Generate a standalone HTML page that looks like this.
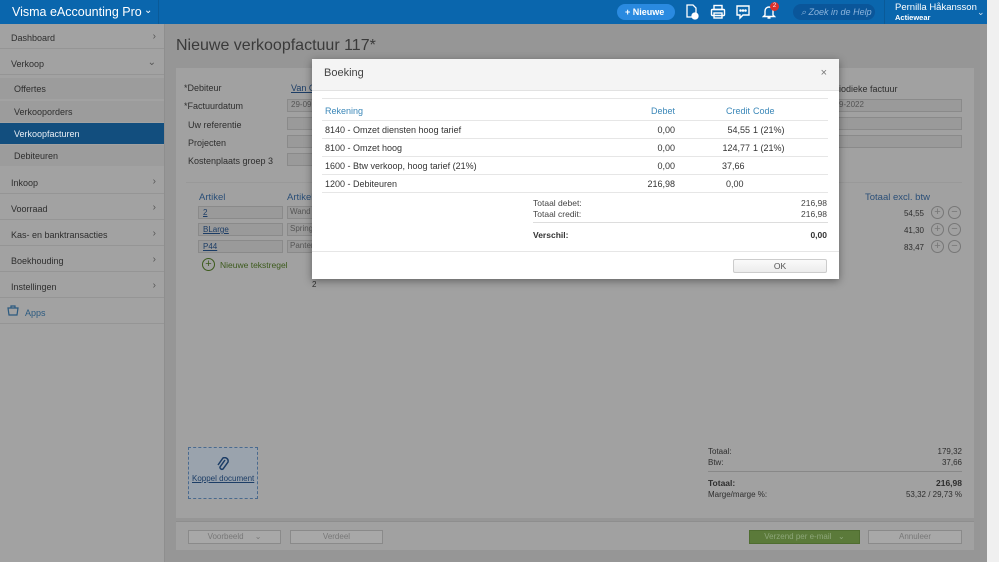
<!DOCTYPE html>
<html><head><meta charset="utf-8"><style>
*{box-sizing:border-box;margin:0;padding:0}
body{width:999px;height:562px;overflow:hidden;font-family:"Liberation Sans",sans-serif;font-size:9px;color:#333;background:#969696;position:relative}
.a{position:absolute}
.top{left:0;top:0;width:987px;height:24px;background:#0a66ad}
.side{left:0;top:24px;width:165px;height:538px;background:#a2a2a2;border-right:1px solid #8e8e8e}
.si{position:absolute;left:0;width:164px;height:25px;border-bottom:1px solid #959595;padding:9px 0 0 11px;font-size:9px;color:#2e2e2e}
.sub{position:absolute;left:0;width:164px;height:21px;padding:6px 0 0 14px;color:#2e2e2e;background:#9c9c9c}
.chev{position:absolute;right:8px;top:7px;color:#555;font-size:10px}
.card{left:176px;top:68px;width:798px;height:450px;background:#a1a1a1}
.inp{position:absolute;height:13px;background:#9a9a9a;border:1px solid #8a8a8a}
.lbl{position:absolute;color:#2e2e2e;font-size:9px}
.lnk{color:#1c3d66;text-decoration:underline}
.modal{left:312px;top:59px;width:527px;height:220px;background:#fff;box-shadow:0 2px 8px rgba(0,0,0,.4)}
.mh{height:32px;background:#f4f4f4;border-bottom:1px solid #e2e2e2;padding:8px 0 0 12px;font-size:11px;color:#444}
.row{position:absolute;left:10px;width:506px;height:18px;border-bottom:1px solid #e6e6e6;font-size:9px;color:#333}
.row span{position:absolute;top:4px}
.r{text-align:right}
.circ{position:absolute;width:13px;height:13px;border:1px solid #777;border-radius:50%;color:#777;font-size:11px;line-height:10px;text-align:center}
.btn{position:absolute;height:14px;border:1px solid #8a8a8a;background:#a8a8a8;color:#777;font-size:8px;text-align:center;line-height:12px}
</style></head><body>
<div class="a top">
 <div class="a" style="left:12px;top:5px;color:#fff;font-size:12.5px">Visma eAccounting Pro</div>
 <div class="a" style="left:144px;top:5px;color:#fff;font-size:10px">⌄</div>
 <div class="a" style="left:158px;top:0;width:1px;height:24px;background:#0a5a98"></div>
 <div class="a" style="left:617px;top:4px;width:58px;height:16px;background:#2a8ae0;border-radius:8px;color:#fff;font-size:9px;font-weight:bold;line-height:16px;padding-left:8px">+ Nieuwe</div>
 <svg class="a" style="left:684px;top:4px" width="16" height="16" viewBox="0 0 16 16" fill="none" stroke="#fff" stroke-width="1.3"><path d="M3 1h6l3 3v9H3z"/><circle cx="11" cy="12" r="3" fill="#fff"/></svg>
 <svg class="a" style="left:710px;top:4px" width="16" height="16" viewBox="0 0 16 16" fill="none" stroke="#fff" stroke-width="1.4"><rect x="4" y="1.5" width="8" height="4"/><rect x="1.5" y="5.5" width="13" height="6" rx="1"/><rect x="4" y="9" width="8" height="5"/></svg>
 <svg class="a" style="left:735px;top:4px" width="16" height="16" viewBox="0 0 16 16" fill="none" stroke="#fff" stroke-width="1.4"><path d="M2 2h12v9H8l-3 3v-3H2z"/><circle cx="5.5" cy="6.5" r=".6" fill="#fff"/><circle cx="8" cy="6.5" r=".6" fill="#fff"/><circle cx="10.5" cy="6.5" r=".6" fill="#fff"/></svg>
 <svg class="a" style="left:761px;top:4px" width="16" height="16" viewBox="0 0 16 16" fill="none" stroke="#fff" stroke-width="1.4"><path d="M4 11V7a4 4 0 0 1 8 0v4l1.5 1.5h-11z M6.5 14h3"/></svg>
 <div class="a" style="left:770px;top:2px;width:9px;height:9px;border-radius:50%;background:#d9302c;color:#fff;font-size:6px;text-align:center;line-height:9px">2</div>
 <div class="a" style="left:793px;top:4px;width:82px;height:16px;background:#0a569a;border-radius:8px;color:#8db5dd;font-size:9px;font-style:italic;line-height:16px;padding-left:8px">⌕ Zoek in de Help</div>
 <div class="a" style="left:884px;top:0;width:1px;height:24px;background:#0a5a98"></div>
 <div class="a" style="left:895px;top:2px;color:#fff;font-size:9.5px">Pernilla Håkansson</div>
 <div class="a" style="left:895px;top:13px;color:#fff;font-size:7.5px;font-weight:bold">Actiewear</div>
 <div class="a" style="left:977px;top:7px;color:#cfe0f0;font-size:9px">⌄</div>
</div>
<div class="a" style="left:987px;top:0;width:12px;height:562px;background:#f0f0f0"></div>
<div class="a side">
 <div class="si" style="top:0">Dashboard<span class="chev">›</span></div>
 <div class="si" style="top:26px">Verkoop<span class="chev">⌄</span></div>
 <div class="sub" style="top:54px">Offertes</div>
 <div class="sub" style="top:77px">Verkooporders</div>
 <div class="sub" style="top:99px;background:#124e7e;color:#e8eef5">Verkoopfacturen</div>
 <div class="sub" style="top:121px">Debiteuren</div>
 <div class="si" style="top:145px">Inkoop<span class="chev">›</span></div>
 <div class="si" style="top:171px">Voorraad<span class="chev">›</span></div>
 <div class="si" style="top:197px">Kas- en banktransacties<span class="chev">›</span></div>
 <div class="si" style="top:223px">Boekhouding<span class="chev">›</span></div>
 <div class="si" style="top:249px">Instellingen<span class="chev">›</span></div>
 <div class="si" style="top:275px;color:#2b5a80;padding-left:25px">Apps</div>
 <svg class="a" style="left:7px;top:280px" width="12" height="12" viewBox="0 0 12 12" fill="none" stroke="#2b5a80" stroke-width="1.2"><path d="M1 4h10l-1 7H2z M4 4V2h4v2"/></svg>
</div>
<div class="a" style="left:176px;top:37px;font-size:16px;color:#3a3a3a">Nieuwe verkoopfactuur 117*</div>
<div class="a card">
 <div class="lbl" style="left:8px;top:15px">*Debiteur</div>
 <div class="lbl" style="left:8px;top:33px">*Factuurdatum</div>
 <div class="lbl" style="left:12px;top:52px">Uw referentie</div>
 <div class="lbl" style="left:12px;top:70px">Projecten</div>
 <div class="lbl" style="left:12px;top:88px">Kostenplaats groep 3</div>
 <div class="lbl lnk" style="left:115px;top:15px">Van G</div>
 <div class="inp" style="left:111px;top:31px;width:30px;color:#555;font-size:8px;padding-left:3px">29-09</div>
 <div class="inp" style="left:111px;top:49px;width:30px"></div>
 <div class="inp" style="left:111px;top:67px;width:30px"></div>
 <div class="inp" style="left:111px;top:85px;width:30px"></div>
 <div class="lbl" style="left:660px;top:16px">riodieke factuur</div>
 <div class="inp" style="left:660px;top:31px;width:126px;color:#555;font-size:8px;padding-left:2px">9-2022</div>
 <div class="inp" style="left:660px;top:49px;width:126px"></div>
 <div class="inp" style="left:660px;top:67px;width:126px"></div>
 <div class="a" style="left:10px;top:114px;width:776px;height:1px;background:#999"></div>
 <div class="lbl" style="left:23px;top:124px;color:#2b4f78;font-size:9.5px">Artikel</div>
 <div class="lbl" style="left:111px;top:124px;color:#2b4f78;font-size:9.5px">Artikel</div>
 <div class="lbl" style="left:689px;top:124px;color:#2b4f78;font-size:9.5px">Totaal excl. btw</div>
 <div class="inp" style="left:22px;top:138px;width:85px;padding-left:4px"><span class="lnk" style="font-size:8px">2</span></div>
 <div class="inp" style="left:22px;top:155px;width:85px;padding-left:4px"><span class="lnk" style="font-size:8px">BLarge</span></div>
 <div class="inp" style="left:22px;top:172px;width:85px;padding-left:4px"><span class="lnk" style="font-size:8px">P44</span></div>
 <div class="inp" style="left:111px;top:138px;width:30px;font-size:8px;color:#555;padding-left:2px">Wand</div>
 <div class="inp" style="left:111px;top:155px;width:30px;font-size:8px;color:#555;padding-left:2px">Spring</div>
 <div class="inp" style="left:111px;top:172px;width:30px;font-size:8px;color:#555;padding-left:2px">Panter</div>
 <div class="lbl" style="left:720px;top:141px;width:28px;text-align:right;font-size:8px">54,55</div>
 <div class="lbl" style="left:720px;top:158px;width:28px;text-align:right;font-size:8px">41,30</div>
 <div class="lbl" style="left:720px;top:175px;width:28px;text-align:right;font-size:8px">83,47</div>
 <div class="circ" style="left:755px;top:138px">+</div><div class="circ" style="left:772px;top:138px">−</div>
 <div class="circ" style="left:755px;top:155px">+</div><div class="circ" style="left:772px;top:155px">−</div>
 <div class="circ" style="left:755px;top:172px">+</div><div class="circ" style="left:772px;top:172px">−</div>
 <div class="circ" style="left:26px;top:190px;border-color:#3c5a1c;color:#3c5a1c">+</div>
 <div class="lbl" style="left:44px;top:192px;color:#3c5a1c;font-size:8.5px">Nieuwe tekstregel</div>
 <div class="lbl" style="left:136px;top:212px;font-size:8px">2</div>
 <div class="a" style="left:12px;top:379px;width:70px;height:52px;background:#9aa3ad;border:1px dashed #4a6a8e"></div>
 <svg class="a" style="left:40px;top:389px" width="14" height="16" viewBox="0 0 14 16" fill="none" stroke="#1c3d66" stroke-width="1.5"><path d="M9 3L4 10a2 2 0 0 0 3 2l5-7a3.5 3.5 0 0 0-5-4L2 8"/></svg>
 <div class="lbl lnk" style="left:16px;top:406px;font-size:8px">Koppel document</div>
 <div class="lbl" style="left:532px;top:379px;font-size:8px">Totaal:</div><div class="lbl" style="left:740px;top:379px;width:46px;text-align:right;font-size:8px">179,32</div>
 <div class="lbl" style="left:532px;top:390px;font-size:8px">Btw:</div><div class="lbl" style="left:740px;top:390px;width:46px;text-align:right;font-size:8px">37,66</div>
 <div class="a" style="left:532px;top:403px;width:254px;height:1px;background:#888"></div>
 <div class="lbl" style="left:532px;top:410px;font-size:8.5px;font-weight:bold">Totaal:</div><div class="lbl" style="left:740px;top:410px;width:46px;text-align:right;font-size:8.5px;font-weight:bold">216,98</div>
 <div class="lbl" style="left:532px;top:422px;font-size:8px">Marge/marge %:</div><div class="lbl" style="left:720px;top:422px;width:66px;text-align:right;font-size:8px">53,32 / 29,73 %</div>
 <div class="a" style="left:0;top:453px;width:798px;height:1px;background:#8e8e8e"></div>
</div>
<div class="a" style="left:176px;top:522px;width:798px;height:28px;background:#a1a1a1"></div>
<div class="btn" style="left:188px;top:530px;width:93px">Voorbeeld &nbsp;&nbsp;&nbsp;&nbsp;⌄</div>
<div class="btn" style="left:290px;top:530px;width:93px">Verdeel</div>
<div class="btn" style="left:749px;top:530px;width:111px;background:#5b7a3a;border-color:#4f6d30;color:#8ea77a">Verzend per e-mail &nbsp;&nbsp;⌄</div>
<div class="btn" style="left:868px;top:530px;width:94px">Annuleer</div>

<div class="a modal">
 <div class="mh">Boeking<span style="position:absolute;right:12px;top:8px;color:#777;font-size:11px">×</span></div>
 <div class="a" style="left:10px;top:39px;width:506px;height:1px;background:#e6e6e6"></div>
 <div class="row" style="top:40px;height:22px;color:#3a87b8;font-size:9px"><span style="left:3px;top:7px">Rekening</span><span class="r" style="left:290px;width:63px;top:7px">Debet</span><span style="left:404px;top:7px">Credit</span><span style="left:431px;top:7px">Code</span></div>
 <div class="row" style="top:62px"><span style="left:3px">8140 - Omzet diensten hoog tarief</span><span class="r" style="left:290px;width:63px">0,00</span><span class="r" style="left:370px;width:58px">54,55</span><span style="left:431px">1 (21%)</span></div>
 <div class="row" style="top:80px"><span style="left:3px">8100 - Omzet hoog</span><span class="r" style="left:290px;width:63px">0,00</span><span class="r" style="left:370px;width:58px">124,77</span><span style="left:431px">1 (21%)</span></div>
 <div class="row" style="top:98px"><span style="left:3px">1600 - Btw verkoop, hoog tarief (21%)</span><span class="r" style="left:290px;width:63px">0,00</span><span style="left:400px">37,66</span></div>
 <div class="row" style="top:116px"><span style="left:3px">1200 - Debiteuren</span><span class="r" style="left:290px;width:63px">216,98</span><span style="left:404px">0,00</span></div>
 <div class="a" style="left:221px;top:139px;font-size:8.5px;color:#444">Totaal debet:</div><div class="a" style="left:460px;top:139px;width:55px;text-align:right;font-size:8.5px;color:#444">216,98</div>
 <div class="a" style="left:221px;top:150px;font-size:8.5px;color:#444">Totaal credit:</div><div class="a" style="left:460px;top:150px;width:55px;text-align:right;font-size:8.5px;color:#444">216,98</div>
 <div class="a" style="left:221px;top:163px;width:295px;height:1px;background:#ddd"></div>
 <div class="a" style="left:221px;top:171px;font-size:8.5px;font-weight:bold;color:#333">Verschil:</div><div class="a" style="left:460px;top:171px;width:55px;text-align:right;font-size:8.5px;font-weight:bold;color:#333">0,00</div>
 <div class="a" style="left:0;top:192px;width:527px;height:1px;background:#e6e6e6"></div>
 <div class="a" style="left:421px;top:200px;width:94px;height:14px;border:1px solid #ccc;background:linear-gradient(#fafafa,#ececec);border-radius:2px;text-align:center;line-height:12px;font-size:8.5px;color:#555">OK</div>
</div>
</body></html>
